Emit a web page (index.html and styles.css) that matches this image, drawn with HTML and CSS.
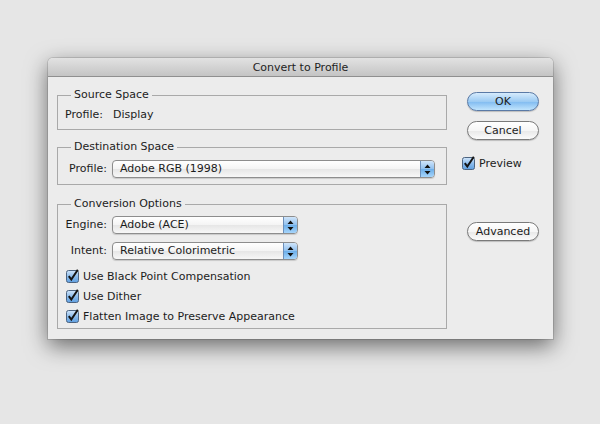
FILE: index.html
```html
<!DOCTYPE html>
<html>
<head>
<meta charset="utf-8">
<link rel="stylesheet" href="styles.css">
</head>
<body>
<div class="dialog">
  <div class="titlebar">Convert to Profile</div>
  <div class="content">
    <div class="main">
      <fieldset class="group src">
        <legend>Source Space</legend>
        <div class="row"><span class="lbl">Profile:</span><span class="val">Display</span></div>
      </fieldset>
      <fieldset class="group dst">
        <legend>Destination Space</legend>
        <div class="row">
          <span class="lbl">Profile:</span>
          <div class="popup wide"><span class="ptext">Adobe RGB (1998)</span><span class="stepper"><svg width="7" height="11" viewBox="0 0 7 11"><path d="M3.5 0.5 L6.5 4 L0.5 4 Z M3.5 10.5 L6.5 7 L0.5 7 Z" fill="#111"/></svg></span></div>
        </div>
      </fieldset>
      <fieldset class="group conv">
        <legend>Conversion Options</legend>
        <div class="row">
          <span class="lbl">Engine:</span>
          <div class="popup narrow"><span class="ptext">Adobe (ACE)</span><span class="stepper"><svg width="7" height="11" viewBox="0 0 7 11"><path d="M3.5 0.5 L6.5 4 L0.5 4 Z M3.5 10.5 L6.5 7 L0.5 7 Z" fill="#111"/></svg></span></div>
        </div>
        <div class="row intent">
          <span class="lbl">Intent:</span>
          <div class="popup narrow"><span class="ptext">Relative Colorimetric</span><span class="stepper"><svg width="7" height="11" viewBox="0 0 7 11"><path d="M3.5 0.5 L6.5 4 L0.5 4 Z M3.5 10.5 L6.5 7 L0.5 7 Z" fill="#111"/></svg></span></div>
        </div>
        <div class="checks">
          <div class="check"><svg class="cb" width="14" height="14" viewBox="0 0 14 14"><defs><linearGradient id="g1" x1="0" y1="0" x2="0" y2="1"><stop offset="0" stop-color="#d2e6fa"/><stop offset="0.5" stop-color="#8cbcec"/><stop offset="1" stop-color="#5f9fe0"/></linearGradient></defs><rect x="0.5" y="1.5" width="12" height="12" rx="2" fill="url(#g1)" stroke="#4d6480"/><path d="M2.8 7.2 L5.3 10.6 L11.8 0.8" fill="none" stroke="#141414" stroke-width="2"/></svg><span>Use Black Point Compensation</span></div>
          <div class="check"><svg class="cb" width="14" height="14" viewBox="0 0 14 14"><rect x="0.5" y="1.5" width="12" height="12" rx="2" fill="url(#g1)" stroke="#4d6480"/><path d="M2.8 7.2 L5.3 10.6 L11.8 0.8" fill="none" stroke="#141414" stroke-width="2"/></svg><span>Use Dither</span></div>
          <div class="check"><svg class="cb" width="14" height="14" viewBox="0 0 14 14"><rect x="0.5" y="1.5" width="12" height="12" rx="2" fill="url(#g1)" stroke="#4d6480"/><path d="M2.8 7.2 L5.3 10.6 L11.8 0.8" fill="none" stroke="#141414" stroke-width="2"/></svg><span>Flatten Image to Preserve Appearance</span></div>
        </div>
      </fieldset>
    </div>
    <div class="side">
      <div class="btn ok">OK</div>
      <div class="btn cancel">Cancel</div>
      <div class="check preview"><svg class="cb" width="14" height="14" viewBox="0 0 14 14"><rect x="0.5" y="1.5" width="12" height="12" rx="2" fill="url(#g1)" stroke="#4d6480"/><path d="M2.8 7.2 L5.3 10.6 L11.8 0.8" fill="none" stroke="#141414" stroke-width="2"/></svg><span>Preview</span></div>
      <div class="btn advanced">Advanced</div>
    </div>
  </div>
</div>
</body>
</html>
```

FILE: styles.css
```css
html, body {
  margin: 0;
  padding: 0;
}
body {
  width: 600px;
  height: 424px;
  background: #e6e6e6;
  font-family: "DejaVu Sans", "Liberation Sans", sans-serif;
  font-size: 11px;
  color: #1c1c1c;
  padding-top: 58px;
  box-sizing: border-box;
  overflow: hidden;
}
.dialog {
  margin-left: 48px;
  width: 505px;
  height: 281px;
  background: #ececec;
  border-radius: 5px 5px 0 0;
  box-shadow: 0 7px 22px rgba(0, 0, 0, 0.55), 0 0 0 1px rgba(0, 0, 0, 0.12);
  display: flex;
  flex-direction: column;
}
.titlebar {
  height: 18px;
  line-height: 19px;
  text-align: center;
  font-size: 11px;
  color: #1e1e1e;
  background: linear-gradient(#e2e2e2, #c4c4c4);
  border-bottom: 1px solid #8f8f8f;
  border-radius: 5px 5px 0 0;
}
.content {
  display: flex;
  padding: 0 14px 0 9px;
  gap: 15px;
}
.main {
  width: 390px;
  display: flex;
  flex-direction: column;
}
.group {
  margin: 0;
  border: 1px solid #a9a9a9;
  padding: 0 10px 0 6px;
  min-width: 0;
}
.group legend {
  margin-left: 7px;
  padding: 0 3px;
  line-height: 16px;
  font-size: 11px;
  color: #1c1c1c;
}
.src {
  margin-top: 10px;
  padding-top: 5px;
  padding-bottom: 7px;
}
.dst {
  margin-top: 9px;
  padding-top: 5px;
  padding-bottom: 6px;
}
.conv {
  margin-top: 11px;
  padding-top: 4px;
  padding-bottom: 2px;
}
.row {
  display: flex;
  align-items: center;
  gap: 5px;
  min-height: 14px;
  line-height: 14px;
}
.row.intent {
  margin-top: 8px;
}
.lbl {
  width: 43px;
  text-align: right;
}
.src .lbl {
  width: 39px;
  margin-right: 5px;
}
.popup {
  height: 16px;
  border: 1px solid #8d8d8d;
  border-radius: 4px;
  background: linear-gradient(#ffffff, #f4f4f4 50%, #e6e6e6 51%, #f7f7f7);
  display: flex;
  align-items: center;
  box-shadow: 0 1px 1px rgba(0, 0, 0, 0.15);
  overflow: hidden;
}
.popup.wide {
  width: 321px;
}
.popup.narrow {
  width: 184px;
}
.ptext {
  flex: 1;
  padding-left: 7px;
}
.stepper {
  width: 13px;
  height: 16px;
  border-left: 1px solid #6c8fba;
  background: linear-gradient(#d0e5fa, #8fc0ef 50%, #6caee9 51%, #a6d5fb);
  display: flex;
  align-items: center;
  justify-content: center;
}
.checks {
  margin-top: 6px;
  margin-left: 2px;
}
.check {
  display: flex;
  align-items: center;
  gap: 3px;
  height: 20px;
}
.cb {
  display: block;
  flex: none;
}
.side {
  width: 77px;
  display: flex;
  flex-direction: column;
}
.btn {
  margin-left: 5px;
  width: 70px;
  height: 17px;
  line-height: 17px;
  text-align: center;
  border: 1px solid #7a7a7a;
  border-radius: 10px;
  background: linear-gradient(#ffffff, #f6f6f6 50%, #e8e8e8 51%, #fbfbfb);
  box-shadow: 0 1px 1px rgba(0, 0, 0, 0.2);
  font-size: 11px;
}
.ok {
  margin-top: 15px;
  border-color: #5a7aa6;
  background: linear-gradient(#d6ebfc, #9ccbf3 50%, #7fbaf0 51%, #c0e4fd);
}
.cancel {
  margin-top: 10px;
}
.preview {
  margin-top: 13px;
}
.advanced {
  margin-top: 49px;
}
```
